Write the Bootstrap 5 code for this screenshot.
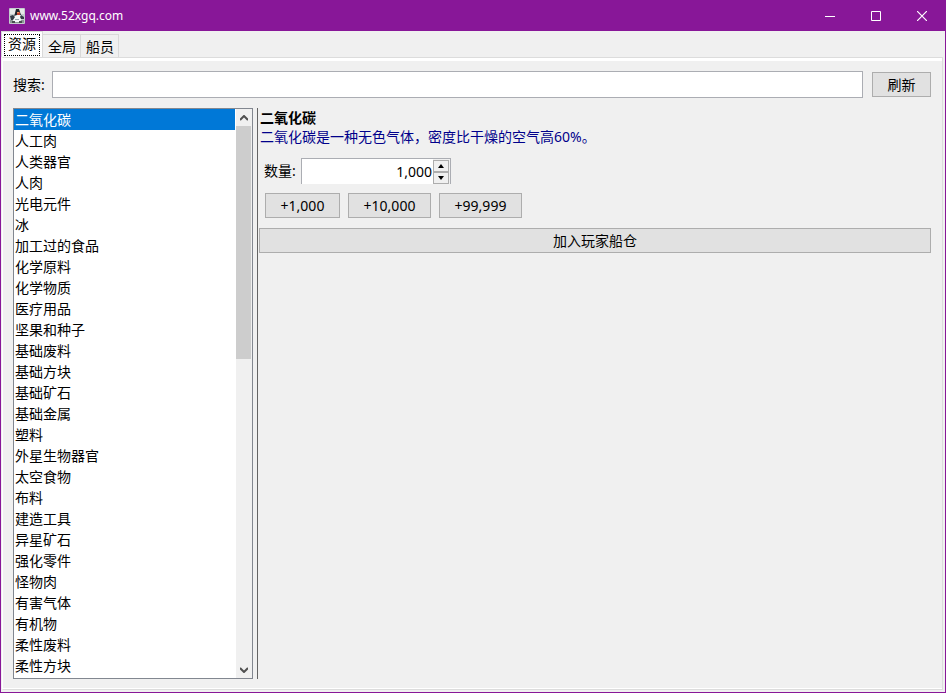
<!DOCTYPE html>
<html lang="zh-CN">
<head>
<meta charset="utf-8">
<meta name="viewport" content="width=device-width, initial-scale=1">
<title>www.52xgq.com</title>
<link href="https://cdn.jsdelivr.net/npm/bootstrap@5.3.0/dist/css/bootstrap.min.css" rel="stylesheet">
<style>
body { font: 14px/20px "Noto Sans", "Noto Sans CJK SC", sans-serif; color: #000; background: #f0f0f0; }
.app-window { border: 1px solid #881798; }
.title-bar { height: 30px; background: #881798; color: #fff; padding-left: 8px; gap: 5px; }
.title-bar h1 { font-size: 12px; line-height: 20px; font-weight: 400; }
.win-btn { width: 46px; height: 30px; color: #fff; background: none; border: 0; padding: 0; display: flex; align-items: center; justify-content: center; }
.app-tabs { height: 26px; border: 0; }
.app-tabs .nav-link { border: 1px solid #d9d9d9; border-left: 0; border-bottom: 0; border-radius: 0; margin: 0; padding: 1px 4px 0 5px; height: 23px; color: #000; background: #f0f0f0; }
.app-tabs .nav-link.active { border: 1px solid #d9d9d9; border-bottom: 0; background: #fff; padding: 2px; height: 26px; color: #000; }
.app-tabs .nav-link.active span { display: block; border: 1px dotted #000; padding: 0 3px; height: 22px; line-height: 18px; }
.app-panel { margin: 0 2px 2px 1px; border: 1px solid #dcdcdc; border-left-color: #fff; box-shadow: inset 0 3px #fff, inset 0 -1px #fff; padding: 13px 11px 10px 10px; gap: 10px; }
.search-row { height: 27px; }
.search-row label { width: 39px; }
.search-row .push { min-width: 59px; margin-left: 9px; }
.field { border: 1px solid #abadb3; border-radius: 0; background: #fff; height: 27px; padding: 0 4px; font-size: 14px; color: #000; }
.push { border: 1px solid #adadad; border-radius: 0; background: #e1e1e1; color: #000; font-size: 14px; line-height: 20px; height: 25px; padding: 1px 0; }
.push:hover { background: #e5f1fb; border-color: #0078d7; color: #000; }
.resource-box { width: 240px; border: 1px solid #828790; background: #fff; }
.resource-list .list-group-item { height: 21px; flex: none; border: 0; border-radius: 0; padding: 0 1px; line-height: 21px; color: #000; background: #fff; }
.resource-list .list-group-item.active { background: #0078d7; color: #fff; }
.scroll-rail { width: 16px; background: #f0f0f0; margin-left: 1px; }
.scroll-rail button { height: 17px; border: 0; padding: 0; background: none; display: flex; align-items: center; justify-content: center; }
.scroll-thumb { height: 233px; background: #cdcdcd; margin-right: 1px; }
.splitter { width: 1px; background: #646464; margin-left: 4px; }
.detail { margin-left: 1px; }
.detail h2 { font-size: 14px; line-height: 20px; font-weight: 700; padding-left: 1px; }
.detail .note { line-height: 18px; color: #00008b; padding-left: 1px; }
.amount-row { height: 26px; padding-left: 5px; margin-top: 12px; }
.amount-row label { width: 37px; }
.spinner { width: 150px; height: 26px; border: 1px solid #abadb3; border-bottom: 0; background: #fff; }
.spinner input { min-width: 0; border: 0; background: none; text-align: right; padding: 0 1px 0 0; color: #000; outline: 0; }
.spin-btns { width: 17px; background: #f0f0f0; padding: 1px 1px 0 0; }
.spin-btns button { height: 12px; border: 1px solid #adadad; background: #f0f0f0; padding: 0; display: flex; align-items: center; justify-content: center; }
.quick-row { gap: 8px; margin: 9px 0 10px 6px; }
.quick-row .push { width: 83px; }
.quick-row .push:first-child { width: 75px; }
</style>
</head>
<body>
<div class="app-window d-flex flex-column vh-100">
  <header class="title-bar d-flex align-items-center flex-shrink-0">
    <svg width="16" height="16" viewBox="0 0 16 16" aria-hidden="true">
      <rect width="16" height="16" rx="1" fill="#c3cccd"/>
      <path d="M1 1h14v5H1z" fill="#e6e9e8"/>
      <path d="M1 12h14v3H1z" fill="#8d9896"/>
      <path d="M7 1h3l1 3 1 3-3 1-4 1 1-4z" fill="#20242b"/>
      <path d="M5 8l3-1 4 0 1 3-2 4H5l-2-3z" fill="#f4f7f8"/>
      <path d="M8 4h3v3H8z" fill="#c34531"/>
      <path d="M8 4h2v1H8z" fill="#e99a63"/>
      <path d="M1 8l3-1 2 2-2 3H2zM12 7l3 2v2h-3l-1-2z" fill="#343c46"/>
      <path d="M6 11h4v1H6z" fill="#9ba9ad"/>
      <path d="M3 13h3v2H3zM10 13h3v2h-3z" fill="#48504f"/>
    </svg>
    <h1 class="m-0 flex-grow-1">www.52xgq.com</h1>
    <div class="d-flex">
      <button class="win-btn" type="button" aria-label="最小化"><svg width="10" height="10"><path d="M0 5.500h10" stroke="#fff"/></svg></button>
      <button class="win-btn" type="button" aria-label="最大化"><svg width="10" height="10"><path d="M.5 .5h9v9h-9z" fill="none" stroke="#fff"/></svg></button>
      <button class="win-btn" type="button" aria-label="关闭"><svg width="10" height="10"><path d="M0 0l10 10M10 0L0 10" stroke="#fff" stroke-width="1.200"/></svg></button>
    </div>
  </header>

  <div class="nav nav-tabs app-tabs align-items-end flex-shrink-0" role="tablist">
    <button class="nav-link active" type="button" role="tab" aria-selected="true"><span>资源</span></button>
    <button class="nav-link" type="button" role="tab" aria-selected="false">全局</button>
    <button class="nav-link" type="button" role="tab" aria-selected="false">船员</button>
  </div>

  <main class="app-panel d-flex flex-column flex-grow-1 overflow-hidden">
    <div class="search-row d-flex align-items-center flex-shrink-0">
      <label for="search">搜索:</label>
      <input class="field flex-grow-1" id="search" type="text">
      <button class="btn push" type="button">刷新</button>
    </div>

    <div class="d-flex flex-grow-1 overflow-hidden">
      <div class="resource-box d-flex flex-shrink-0">
        <div class="resource-list list-group rounded-0 flex-grow-1 overflow-hidden">
          <button type="button" class="list-group-item list-group-item-action active" aria-current="true">二氧化碳</button>
          <button type="button" class="list-group-item list-group-item-action">人工肉</button>
          <button type="button" class="list-group-item list-group-item-action">人类器官</button>
          <button type="button" class="list-group-item list-group-item-action">人肉</button>
          <button type="button" class="list-group-item list-group-item-action">光电元件</button>
          <button type="button" class="list-group-item list-group-item-action">冰</button>
          <button type="button" class="list-group-item list-group-item-action">加工过的食品</button>
          <button type="button" class="list-group-item list-group-item-action">化学原料</button>
          <button type="button" class="list-group-item list-group-item-action">化学物质</button>
          <button type="button" class="list-group-item list-group-item-action">医疗用品</button>
          <button type="button" class="list-group-item list-group-item-action">坚果和种子</button>
          <button type="button" class="list-group-item list-group-item-action">基础废料</button>
          <button type="button" class="list-group-item list-group-item-action">基础方块</button>
          <button type="button" class="list-group-item list-group-item-action">基础矿石</button>
          <button type="button" class="list-group-item list-group-item-action">基础金属</button>
          <button type="button" class="list-group-item list-group-item-action">塑料</button>
          <button type="button" class="list-group-item list-group-item-action">外星生物器官</button>
          <button type="button" class="list-group-item list-group-item-action">太空食物</button>
          <button type="button" class="list-group-item list-group-item-action">布料</button>
          <button type="button" class="list-group-item list-group-item-action">建造工具</button>
          <button type="button" class="list-group-item list-group-item-action">异星矿石</button>
          <button type="button" class="list-group-item list-group-item-action">强化零件</button>
          <button type="button" class="list-group-item list-group-item-action">怪物肉</button>
          <button type="button" class="list-group-item list-group-item-action">有害气体</button>
          <button type="button" class="list-group-item list-group-item-action">有机物</button>
          <button type="button" class="list-group-item list-group-item-action">柔性废料</button>
          <button type="button" class="list-group-item list-group-item-action">柔性方块</button>
        </div>
        <div class="scroll-rail d-flex flex-column flex-shrink-0">
          <button type="button" aria-label="向上滚动"><svg width="8" height="6"><path d="M0 5l4-4 4 4" fill="none" stroke="#505050" stroke-width="2"/></svg></button>
          <div class="flex-grow-1"><div class="scroll-thumb"></div></div>
          <button type="button" aria-label="向下滚动"><svg width="8" height="6"><path d="M0 1l4 4 4-4" fill="none" stroke="#505050" stroke-width="2"/></svg></button>
        </div>
      </div>
      <div class="splitter flex-shrink-0"></div>

      <section class="detail flex-grow-1">
        <h2 class="m-0">二氧化碳</h2>
        <p class="note m-0">二氧化碳是一种无色气体，密度比干燥的空气高60%。</p>
        <div class="amount-row d-flex align-items-center">
          <label for="amount">数量:</label>
          <div class="spinner d-flex">
            <input class="flex-grow-1" id="amount" type="text" inputmode="numeric" value="1,000">
            <div class="spin-btns d-flex flex-column flex-shrink-0">
              <button type="button" aria-label="增加"><svg width="6" height="4"><path d="M0 4l3-4 3 4z"/></svg></button>
              <button type="button" aria-label="减少"><svg width="6" height="4"><path d="M0 0h6l-3 4z"/></svg></button>
            </div>
          </div>
        </div>
        <div class="quick-row d-flex">
          <button class="btn push" type="button">+1,000</button>
          <button class="btn push" type="button">+10,000</button>
          <button class="btn push" type="button">+99,999</button>
        </div>
        <button class="btn push w-100" type="button">加入玩家船仓</button>
      </section>
    </div>
  </main>
</div>
<script src="https://cdn.jsdelivr.net/npm/bootstrap@5.3.0/dist/js/bootstrap.bundle.min.js"></script>
</body>
</html>
